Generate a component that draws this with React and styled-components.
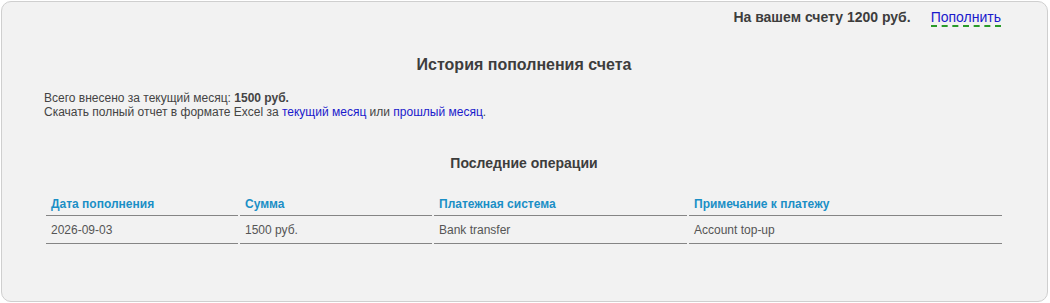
import styled, { createGlobalStyle } from 'styled-components';

const Global = createGlobalStyle`
  html, body {
    margin: 0;
    padding: 0;
    background: #ffffff;
  }
  body {
    font-family: "Liberation Sans", Arial, sans-serif;
  }
`

const Panel = styled.div`
  box-sizing: border-box;
  margin: 1px;
  width: 1047px;
  height: 301px;
  border: 1px solid #cfcfcf;
  border-radius: 10px;
  background: #f2f2f2;
  padding: 7px 43px 0 42px;
  color: #444;
`

const Balance = styled.div`
  display: flex;
  justify-content: flex-end;
  align-items: baseline;
  gap: 20px;
  padding-right: 3px;
  font-size: 14px;
  line-height: 16px;
`

const BalanceText = styled.b`
  color: #3d3d3d;
`

const TopUp = styled.a`
  color: #1a1acc;
  text-decoration: none;
  border-bottom: 2px dashed #2a9a2a;
  cursor: pointer;
`

const Title = styled.h2`
  margin: 28px 0 0;
  text-align: center;
  font-size: 16px;
  line-height: 19px;
  color: #3d3d3d;
`

const Summary = styled.div`
  margin-top: 17px;
  font-size: 12px;
  line-height: 14px;
  color: #444;
`

const Link = styled.a`
  color: #1a1acc;
  text-decoration: none;
  cursor: pointer;
`

const SubTitle = styled.h3`
  margin: 36px 0 0;
  text-align: center;
  font-size: 14px;
  line-height: 16px;
  color: #3d3d3d;
`

const Table = styled.table`
  margin-top: 18px;
  width: 960px;
  border-collapse: separate;
  border-spacing: 2px;
  font-size: 12px;
  line-height: 14px;
`

const Th = styled.th`
  width: ${p => p.$w}px;
  text-align: left;
  padding: 6px 5px 4px;
  color: #1b8fc6;
  font-weight: bold;
  border-bottom: 1px solid #858585;
`

const Td = styled.td`
  padding: 5px 5px 6px;
  color: #555;
  border-bottom: 1px solid #858585;
`

const columns = [
  { title: 'Дата пополнения', w: 182 },
  { title: 'Сумма', w: 182 },
  { title: 'Платежная система', w: 243 },
  { title: 'Примечание к платежу', w: 303 },
]

const rows = [
  ['2026-09-03', '1500 руб.', 'Bank transfer', 'Account top-up'],
]

export default function App() {
  return (
    <>
      <Global />
      <Panel>
        <Balance>
          <BalanceText>На вашем счету 1200 руб.</BalanceText>
          <TopUp>Пополнить</TopUp>
        </Balance>
        <Title>История пополнения счета</Title>
        <Summary>
          Всего внесено за текущий месяц: <b>1500 руб.</b>
          <br />
          Скачать полный отчет в формате Excel за <Link>текущий месяц</Link> или <Link>прошлый месяц</Link>.
        </Summary>
        <SubTitle>Последние операции</SubTitle>
        <Table>
          <thead>
            <tr>
              {columns.map(c => (
                <Th key={c.title} $w={c.w}>{c.title}</Th>
              ))}
            </tr>
          </thead>
          <tbody>
            {rows.map((r, i) => (
              <tr key={i}>
                {r.map((v, j) => <Td key={j}>{v}</Td>)}
              </tr>
            ))}
          </tbody>
        </Table>
      </Panel>
    </>
  )
}
